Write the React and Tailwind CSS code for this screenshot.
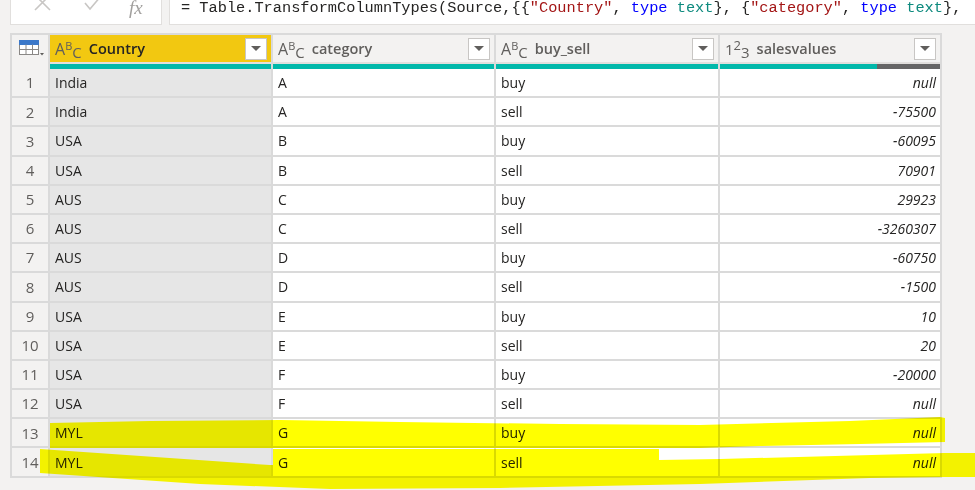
import React from "react";

const rows = [
  ["India", "A", "buy", "null"],
  ["India", "A", "sell", "-75500"],
  ["USA", "B", "buy", "-60095"],
  ["USA", "B", "sell", "70901"],
  ["AUS", "C", "buy", "29923"],
  ["AUS", "C", "sell", "-3260307"],
  ["AUS", "D", "buy", "-60750"],
  ["AUS", "D", "sell", "-1500"],
  ["USA", "E", "buy", "10"],
  ["USA", "E", "sell", "20"],
  ["USA", "F", "buy", "-20000"],
  ["USA", "F", "sell", "null"],
  ["MYL", "G", "buy", "null"],
  ["MYL", "G", "sell", "null"],
];

function AbcIcon() {
  return (
    <span className="flex items-end text-[#605e5c] font-normal leading-none h-[20px]">
      <span className="text-[16px] relative top-[-2px]">A</span>
      <span className="text-[11px] relative top-[-8px]">B</span>
      <span className="text-[15px] relative top-[1px]">C</span>
    </span>
  );
}

function NumIcon() {
  return (
    <span className="flex items-end text-[#605e5c] font-normal leading-none h-[20px]">
      <span className="text-[15px] relative top-[-2px]">1</span>
      <span className="text-[13px] relative top-[-7px]">2</span>
      <span className="text-[15px] relative top-[1px]">3</span>
    </span>
  );
}

function DropBtn() {
  return (
    <div className="w-[22px] h-[22px] border border-[#c8c6c4] bg-white flex items-center justify-center shrink-0">
      <svg width="10" height="6" viewBox="0 0 10 6">
        <path d="M0 0 L10 0 L5 5 Z" fill="#605e5c" />
      </svg>
    </div>
  );
}

function HeaderCell({ label, icon, active }) {
  return (
    <div
      className={
        "h-full flex items-center pl-[5px] pr-[4px] gap-[7px] border-r-2 border-[#dadada] " +
        (active ? "bg-[#f2c811] text-[#252423]" : "bg-[#f3f2f1] text-[#605e5c]")
      }
    >
      {icon}
      <span className="font-semibold text-[14.5px] flex-1">{label}</span>
      <DropBtn />
    </div>
  );
}

function TableIcon() {
  return (
    <svg width="26" height="18" viewBox="0 0 26 18">
      <rect x="0.5" y="0.5" width="19" height="14" fill="#fff" stroke="#8a8886" />
      <rect x="0.5" y="0.5" width="19" height="4" fill="#3b78c9" stroke="#3b78c9" />
      <path d="M0.5 9.5 H19.5 M7 4.5 V14.5 M13.5 4.5 V14.5" stroke="#8a8886" strokeWidth="1" />
      <path d="M21 13 L25 13 L23 15.5 Z" fill="#605e5c" />
    </svg>
  );
}

export default function App() {
  return (
    <div className="w-[975px] h-[490px] bg-[#f3f2f1] relative overflow-hidden font-['Open_Sans','Noto_Sans',sans-serif]">
      {/* formula bar */}
      <div className="flex h-[25px] pl-[10px] gap-[7px]">
        <div className="w-[152px] h-full bg-white border border-t-0 border-[#e1dfdd] flex items-start">
          <svg className="ml-[22px] mt-[-5px]" width="20" height="18" viewBox="0 0 20 18">
            <path d="M2 0 L17 15 M17 0 L2 15" stroke="#c8c6c4" strokeWidth="1.6" />
          </svg>
          <svg className="ml-[30px] mt-[-4px]" width="20" height="18" viewBox="0 0 20 18">
            <path d="M2 7 L7 13 L18 0" stroke="#c8c6c4" strokeWidth="1.6" fill="none" />
          </svg>
          <span className="ml-[26px] mt-[-2px] font-['Liberation_Serif',serif] italic text-[19px] leading-none text-[#a19f9d]">
            fx
          </span>
        </div>
        <div className="flex-1 h-full bg-white border border-t-0 border-r-0 border-[#e1dfdd] pl-[11px] overflow-hidden">
          <div className="font-['Liberation_Mono',monospace] text-[15.3px] leading-[16px] mt-0 whitespace-pre text-[#252423]">
            = Table.TransformColumnTypes(Source,{"{{"}
            <span className="text-[#a31515]">"Country"</span>, <span className="text-[#0000ff]">type</span>{" "}
            <span className="text-[#0d8a7e]">text</span>{"}"}, {"{"}
            <span className="text-[#a31515]">"category"</span>, <span className="text-[#0000ff]">type</span>{" "}
            <span className="text-[#0d8a7e]">text</span>{"}"},
          </div>
        </div>
      </div>

      {/* table */}
      <div className="mt-[8px] ml-[10px] w-[932px] border-l-2 border-t-2 border-[#dadada]">
        <div className="grid grid-cols-[38px_223px_223px_224px_222px] h-[27px]">
          <div className="bg-[#f3f2f1] border-r-2 border-[#dadada] flex items-center justify-center pl-[3px]">
            <TableIcon />
          </div>
          <HeaderCell label="Country" icon={<AbcIcon />} active />
          <HeaderCell label="category" icon={<AbcIcon />} />
          <HeaderCell label="buy_sell" icon={<AbcIcon />} />
          <HeaderCell label="salesvalues" icon={<NumIcon />} />
        </div>
        <div className="grid grid-cols-[38px_223px_223px_224px_222px] h-[7px]">
          <div className="bg-[#f3f2f1] border-r-2 border-[#dadada]" />
          <div className="border-r-2 border-[#dadada] flex flex-col">
            <div className="h-[2px] bg-[#e1dfdd]" />
            <div className="h-[5px] bg-[#01b8aa]" />
          </div>
          <div className="border-r-2 border-[#dadada] flex flex-col">
            <div className="h-[2px] bg-[#e1dfdd]" />
            <div className="h-[5px] bg-[#01b8aa]" />
          </div>
          <div className="border-r-2 border-[#dadada] flex flex-col">
            <div className="h-[2px] bg-[#e1dfdd]" />
            <div className="h-[5px] bg-[#01b8aa]" />
          </div>
          <div className="border-r-2 border-[#dadada] flex flex-col">
            <div className="h-[2px] bg-[#e1dfdd]" />
            <div className="h-[5px] flex">
              <div className="w-[157px] bg-[#01b8aa]" />
              <div className="flex-1 bg-[#666666]" />
            </div>
          </div>
        </div>
        {rows.map((r, i) => (
          <div
            key={i}
            className="grid grid-cols-[38px_223px_223px_224px_222px] h-[29.2px] text-[14px] text-[#252423]"
          >
            <div className="bg-[#f3f2f1] border-r-2 border-b-2 border-[#dadada] flex items-center justify-center text-[15px] text-[#605e5c]">
              {i + 1}
            </div>
            <div className="bg-[#e6e6e6] border-r-2 border-b-2 border-[#dadada] flex items-center pl-[5px]">
              {r[0]}
            </div>
            <div className="bg-white border-r-2 border-b-2 border-[#dadada] flex items-center pl-[5px]">
              {r[1]}
            </div>
            <div className="bg-white border-r-2 border-b-2 border-[#dadada] flex items-center pl-[5px]">
              {r[2]}
            </div>
            <div className="bg-white border-r-2 border-b-2 border-[#dadada] flex items-center justify-end pr-[4px] italic">
              {r[3]}
            </div>
          </div>
        ))}
      </div>

      {/* marker highlight over the last two rows */}
      <svg
        className="absolute inset-0 pointer-events-none mix-blend-multiply"
        width="975"
        height="490"
        viewBox="0 0 975 490"
      >
        <polygon
          fill="#ffff00"
          points="50,423 150,421 280,420 400,422 560,424 700,425 850,421 940,417 945,418 945,442 860,444 760,446 700,448 50,448"
        />
        <polygon
          fill="#ffff00"
          points="40,449 270,465 273,465 273,449 659,449 659,460 720,459 945,453 945,477 870,478 700,484 500,488 330,489 200,484 40,473"
        />
        <polygon fill="#ffff00" points="942,453 975,453 975,477 942,477" />
      </svg>
    </div>
  );
}
